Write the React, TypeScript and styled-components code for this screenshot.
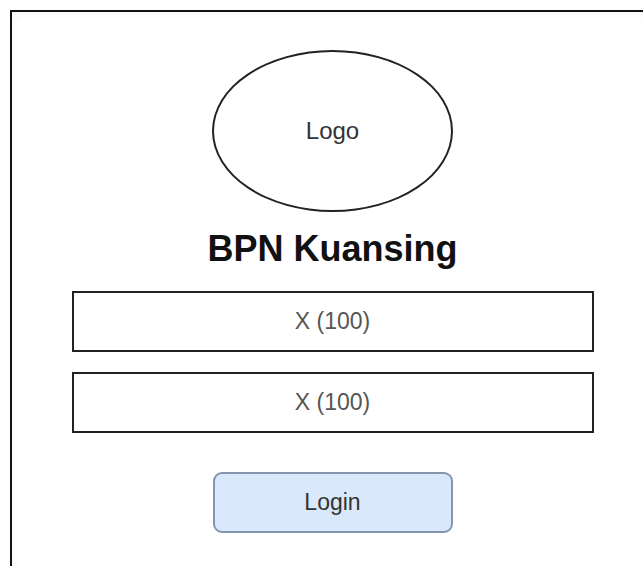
import styled, { createGlobalStyle } from 'styled-components'

const GlobalStyle = createGlobalStyle`
  html, body {
    margin: 0;
    padding: 0;
    background: #ffffff;
    overflow: hidden;
  }
  body {
    font-family: "Liberation Sans", Arial, sans-serif;
  }
`

function App() {
  return (
    <>
      <GlobalStyle />
      <Frame>
        <LogoOval>Logo</LogoOval>
        <Title>BPN Kuansing</Title>
        <FieldList>
          <Field>X (100)</Field>
          <Field>X (100)</Field>
        </FieldList>
        <LoginButton type="button">Login</LoginButton>
      </Frame>
    </>
  )
}

export default App

// the frame runs off the right and bottom edge in the mockup, so only top/left borders show
const Frame = styled.div`
  box-sizing: border-box;
  width: 633px;
  height: 556px;
  margin: 10px 0 0 10px;
  border-top: 2px solid #111;
  border-left: 2px solid #111;
  background: #fff;
  box-shadow: inset 3px 3px 8px rgba(0, 0, 0, 0.03);
  display: flex;
  flex-direction: column;
  align-items: center;
  padding: 38px 0 0 10px;
`

const LogoOval = styled.div`
  box-sizing: border-box;
  width: 241px;
  height: 162px;
  border: 2px solid #222;
  border-radius: 50%;
  display: flex;
  align-items: center;
  justify-content: center;
  font-size: 24px;
  color: #333;
`

const Title = styled.h1`
  margin: 17px 0 0;
  font-size: 36px;
  line-height: 40px;
  font-weight: bold;
  color: #111;
`

const FieldList = styled.div`
  margin-top: 22px;
  display: flex;
  flex-direction: column;
  gap: 20px;
`

const Field = styled.div`
  box-sizing: border-box;
  width: 522px;
  height: 61px;
  border: 2px solid #222;
  display: flex;
  align-items: center;
  justify-content: center;
  font-size: 23px;
  color: #555;
`

const LoginButton = styled.button`
  box-sizing: border-box;
  margin-top: 39px;
  width: 240px;
  height: 61px;
  border: 2px solid #8496ad;
  border-radius: 9px;
  background: #dae8fc;
  font-family: "Liberation Sans", Arial, sans-serif;
  font-size: 23px;
  color: #333;
`
